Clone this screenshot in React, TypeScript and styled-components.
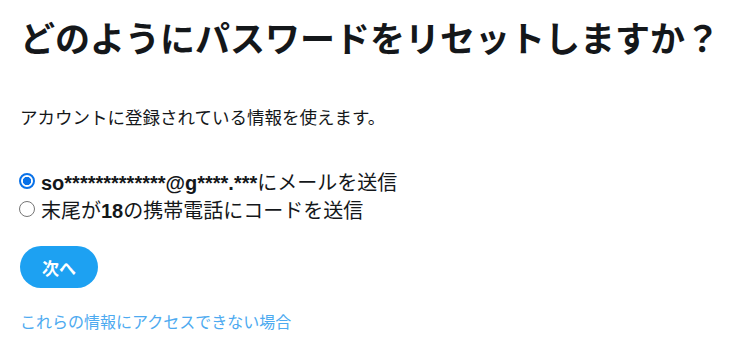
import React from "react";
import styled, { createGlobalStyle } from "styled-components";

const Global = createGlobalStyle`
  html, body { margin: 0; padding: 0; background: #ffffff; }
  body { font-family: "Liberation Sans", Arial, "Noto Sans CJK JP", sans-serif; color: #14171a; }
`;

const Page = styled.div`
  display: flex;
  flex-direction: column;
  align-items: flex-start;
  padding: 0 20px;
`;

const Title = styled.h1`
  margin: 20px 0 0;
  font-size: 35px;
  line-height: 40px;
  font-weight: 700;
  color: #14171a;
  white-space: nowrap;
`;

const Lead = styled.p`
  margin: 48px 0 0;
  font-size: 17.5px;
  line-height: 20px;
  color: #14171a;
`;

const Options = styled.div`
  margin-top: 41px;
  display: flex;
  flex-direction: column;
`;

const Option = styled.label`
  display: flex;
  align-items: center;
  font-size: 20px;
  line-height: 28px;
  color: #14171a;
  white-space: nowrap;
`;

const Radio = styled.input.attrs({ type: "radio" })`
  appearance: none;
  -webkit-appearance: none;
  box-sizing: border-box;
  display: block;
  width: 16px;
  height: 16px;
  min-width: 16px;
  margin: -4px 6px 0 -1px;
  padding: 0;
  flex: 0 0 16px;
  border-radius: 50%;
  border: 1.5px solid #767676;
  background: #ffffff;

  &:checked {
    border: 2px solid #0a72e8;
    background: radial-gradient(circle, #0a72e8 0 3.8px, #ffffff 4.5px);
  }
`;

const Strong = styled.strong`
  font-weight: 700;
`;

const NextButton = styled.button`
  margin-top: 21px;
  height: 42px;
  padding: 0 22px;
  border: none;
  border-radius: 21px;
  background: #1da1f2;
  color: #ffffff;
  font-family: "Liberation Sans", Arial, "Noto Sans CJK JP", sans-serif;
  font-size: 17px;
  font-weight: 700;
  cursor: pointer;
`;

const HelpLink = styled.a`
  margin-top: 25px;
  font-size: 16px;
  line-height: 20px;
  color: #4daaf0;
  text-decoration: none;
`;

export default function App() {
  return (
    <>
      <Global />
      <Page>
        <Title>どのようにパスワードをリセットしますか？</Title>
        <Lead>アカウントに登録されている情報を使えます。</Lead>
        <Options>
          <Option>
            <Radio name="method" defaultChecked />
            <span>
              <Strong>so*************@g****.***</Strong>にメールを送信
            </span>
          </Option>
          <Option>
            <Radio name="method" />
            <span>
              末尾が<Strong>18</Strong>の携帯電話にコードを送信
            </span>
          </Option>
        </Options>
        <NextButton>次へ</NextButton>
        <HelpLink href="#">これらの情報にアクセスできない場合</HelpLink>
      </Page>
    </>
  );
}
